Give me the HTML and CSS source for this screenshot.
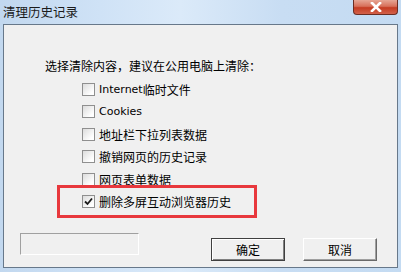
FILE: index.html
```html
<!DOCTYPE html>
<html lang="zh-CN">
<head>
    <meta charset="UTF-8">
    <title>清理历史记录</title>
    <link rel="stylesheet" href="styles.css">
</head>
<body>
    <div class="window">
        <div class="titlebar">
            <span class="title">清理历史记录</span>
            <div class="close-btn">
                <svg width="14" height="10" viewBox="0 0 14 10">
                    <path d="M3 1 L11 9 M11 1 L3 9" stroke="#ffffff" stroke-width="2.6" stroke-linecap="square"/>
                </svg>
            </div>
        </div>
        <div class="client">
            <div class="prompt">选择清除内容，建议在公用电脑上清除：</div>
            <div class="options">
                <div class="option"><span class="box"></span><span class="latin">Internet</span>临时文件</div>
                <div class="option"><span class="box"></span><span class="latin">Cookies</span></div>
                <div class="option"><span class="box"></span>地址栏下拉列表数据</div>
                <div class="option"><span class="box"></span>撤销网页的历史记录</div>
                <div class="option"><span class="box"></span>网页表单数据</div>
                <div class="option"><span class="box checked">
                    <svg width="9" height="9" viewBox="0 0 9 9"><path d="M1 4.5 L3.5 7 L8 1.5" stroke="#1a1a1a" stroke-width="1.8" fill="none"/></svg>
                </span>删除多屏互动浏览器历史</div>
            </div>
            <div class="highlight"></div>
            <div class="footer">
                <div class="status"></div>
                <div class="buttons">
                    <button class="btn default">确定</button>
                    <button class="btn">取消</button>
                </div>
            </div>
        </div>
    </div>
</body>
</html>
```

FILE: styles.css
```css
body, html {
    margin: 0;
    padding: 0;
    width: 401px;
    height: 272px;
    overflow: hidden;
    font-family: "Noto Sans CJK SC", "Liberation Sans", sans-serif;
    font-size: 12px;
    color: #000;
}
.window {
    width: 401px;
    height: 272px;
    display: flex;
    flex-direction: column;
    background: linear-gradient(90deg, #c2d8ef 0%, #cfe2f6 25%, #dbeaf9 45%, #c8ddf3 70%, #c4dbf2 100%);
}
.titlebar {
    height: 24px;
    display: flex;
    justify-content: space-between;
    align-items: flex-start;
    flex-shrink: 0;
}
.title {
    font-size: 12.5px;
    line-height: 16px;
    margin: 4px 0 0 3px;
    color: #1b1b1b;
}
.close-btn {
    width: 45px;
    height: 15px;
    margin-right: 3px;
    box-sizing: border-box;
    border: 1px solid #6b2d22;
    border-top: none;
    border-radius: 0 0 4px 4px;
    background: linear-gradient(180deg, #e6a694 0%, #d7705a 45%, #c53c22 55%, #d2614a 100%);
    display: flex;
    justify-content: center;
    align-items: center;
}
.client {
    position: relative;
    flex: 1;
    margin: 0 3px 4px 3px;
    border: 1px solid #67788a;
    background-color: #f0f0f0;
    padding: 33px 0 0 0;
}
.prompt {
    line-height: 16px;
    margin-left: 41px;
}
.options {
    margin-top: 4px;
    margin-left: 78px;
}
.option {
    height: 22.5px;
    display: flex;
    align-items: center;
}
.box {
    width: 13px;
    height: 13px;
    box-sizing: border-box;
    border: 1px solid #8f8f8f;
    background: linear-gradient(135deg, #dcdcdc 0%, #ffffff 80%);
    margin-right: 4px;
    display: flex;
    justify-content: center;
    align-items: center;
}
.latin {
    font-family: "DejaVu Sans", "Liberation Sans", sans-serif;
    font-size: 11px;
}
.highlight {
    position: absolute;
    left: 53px;
    top: 160px;
    width: 194px;
    height: 27px;
    border: 3px solid #e8383d;
}
.footer {
    display: flex;
    justify-content: space-between;
    margin-top: 20px;
}
.status {
    width: 119px;
    height: 22px;
    box-sizing: border-box;
    margin-left: 16px;
    border: 1px solid #fff;
    border-top-color: #a0a0a0;
    border-left-color: #a0a0a0;
}
.buttons {
    display: flex;
    gap: 18px;
    margin-right: 20px;
    margin-top: 5px;
}
.btn {
    width: 74px;
    height: 23px;
    font-family: "Noto Sans CJK SC", sans-serif;
    font-size: 12px;
    background-color: #f0f0f0;
    border: 1px solid;
    border-color: #ffffff #696969 #696969 #ffffff;
    box-shadow: inset -1px -1px 0 #a0a0a0;
    padding: 0;
}
.btn.default {
    border: 1px solid #404040;
    box-shadow: inset 1px 1px 0 #fff, inset -1px -1px 0 #808080;
}
```
